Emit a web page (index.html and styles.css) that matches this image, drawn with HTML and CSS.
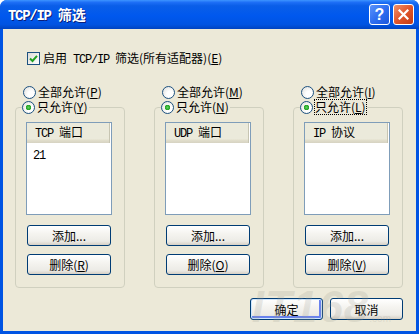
FILE: index.html
```html
<!DOCTYPE html>
<html lang="zh-CN">
<head>
  <meta charset="UTF-8" />
  <title>TCP/IP 筛选</title>
  <link rel="stylesheet" href="styles.css">
</head>
<body>
  <div class="window">
    <div class="titlebar">
      <span class="title"><span class="en">TCP/IP </span>筛选</span>
      <div class="caption-btns">
        <span class="cbtn help">?</span>
        <span class="cbtn close">
          <svg width="11" height="11" viewBox="0 0 11 11"><path d="M1.5 1.5 L9.5 9.5 M9.5 1.5 L1.5 9.5" stroke="#fff" stroke-width="2.2" stroke-linecap="square"/></svg>
        </span>
      </div>
    </div>

    <div class="client">
      <label class="check-row">
        <span class="checkbox">
          <svg width="9" height="9" viewBox="0 0 9 9"><path d="M1 4.5 L3.5 7 L8 1.8" fill="none" stroke="#21a121" stroke-width="2"/></svg>
        </span>
        <span>启用<span class="en"> TCP/IP </span>筛选(所有适配器)(<u>E</u>)</span>
      </label>

      <div class="groups">
        <div class="col">
          <label class="radio-row"><span class="radio"></span><span>全部允许(<u>P</u>)</span></label>
          <fieldset class="group">
            <legend><label class="radio-row"><span class="radio on"></span><span>只允许(<u>Y</u>)</span></label></legend>
            <div class="group-body">
              <div class="listbox">
                <div class="list-head"><span><span class="en">TCP </span>端口</span></div>
                <div class="list-item"><span class="en">21</span></div>
              </div>
              <button class="btn">添加...</button>
              <button class="btn">删除(<u>R</u>)</button>
            </div>
          </fieldset>
        </div>

        <div class="col">
          <label class="radio-row"><span class="radio"></span><span>全部允许(<u>M</u>)</span></label>
          <fieldset class="group">
            <legend><label class="radio-row"><span class="radio on"></span><span>只允许(<u>N</u>)</span></label></legend>
            <div class="group-body">
              <div class="listbox">
                <div class="list-head"><span><span class="en">UDP </span>端口</span></div>
              </div>
              <button class="btn">添加...</button>
              <button class="btn">删除(<u>O</u>)</button>
            </div>
          </fieldset>
        </div>

        <div class="col">
          <label class="radio-row"><span class="radio"></span><span>全部允许(<u>I</u>)</span></label>
          <fieldset class="group">
            <legend><label class="radio-row"><span class="radio on"></span><span class="focus">只允许(<u>L</u>)</span></label></legend>
            <div class="group-body">
              <div class="listbox">
                <div class="list-head"><span><span class="en">IP </span>协议</span></div>
              </div>
              <button class="btn">添加...</button>
              <button class="btn">删除(<u>V</u>)</button>
            </div>
          </fieldset>
        </div>
      </div>

      <div class="footer">
        <button class="btn wide default">确定</button>
        <button class="btn wide">取消</button>
        <span class="watermark">IT168<small>.com</small></span>
      </div>
    </div>
  </div>
</body>
</html>
```

FILE: styles.css
```css
body {
  margin: 0;
  background: #ffffff;
  font-family: "Noto Sans CJK SC", "Liberation Sans", sans-serif;
  font-size: 12px;
  line-height: 14px;
  color: #000;
}

.en {
  font-family: "Liberation Mono", monospace;
  letter-spacing: -1.2px;
  white-space: pre;
}

.window {
  width: 419px;
  height: 334px;
  box-sizing: border-box;
  background: #0054e3;
  border-radius: 7px 7px 0 0;
  display: flex;
  flex-direction: column;
  overflow: hidden;
}

.titlebar {
  height: 29px;
  flex: none;
  display: flex;
  align-items: center;
  justify-content: space-between;
  padding: 0 5px 0 8px;
  background: linear-gradient(to bottom, #3d95ff 0%, #1e6ff6 8%, #0a5ee8 20%, #0058ee 55%, #0053e1 85%, #0043c0 100%);
}

.title {
  color: #fff;
  font-weight: bold;
  font-size: 14px;
  line-height: 16px;
  text-shadow: 1px 1px 0 #0a1e7a;
  margin-top: 1px;
}

.title .en {
  letter-spacing: -1.3px;
}

.caption-btns {
  display: flex;
  gap: 3px;
}

.cbtn {
  width: 21px;
  height: 21px;
  box-sizing: border-box;
  border: 1px solid #fff;
  border-radius: 3px;
  display: flex;
  align-items: center;
  justify-content: center;
  color: #fff;
}

.help {
  background: linear-gradient(to bottom right, #5b93fb, #2f6ff0 50%, #1b56dc);
  font-family: "Liberation Sans", sans-serif;
  font-weight: bold;
  font-size: 16px;
}

.close {
  background: linear-gradient(to bottom right, #f0926c, #e0552b 50%, #c23b15);
}

.client {
  flex: 1;
  margin: 0 3px 3px;
  background: #ece9d8;
  padding: 23px 13px 0 12px;
}

.check-row {
  display: flex;
  align-items: center;
  gap: 3px;
  height: 13px;
  margin-left: 12px;
  white-space: nowrap;
}

.checkbox {
  width: 13px;
  height: 13px;
  box-sizing: border-box;
  border: 1px solid #1c5180;
  background: linear-gradient(to bottom right, #dcdcd7, #ffffff);
  display: flex;
  align-items: center;
  justify-content: center;
  flex: none;
}

.groups {
  display: flex;
  gap: 29px;
  margin-top: 19px;
}

.col {
  width: 110px;
}

.radio-row {
  display: flex;
  align-items: center;
  gap: 2px;
  height: 16px;
  padding-left: 8px;
  white-space: nowrap;
}

.radio {
  width: 13px;
  height: 13px;
  box-sizing: border-box;
  border: 1px solid #1c5180;
  border-radius: 50%;
  background: radial-gradient(circle at 65% 65%, #ffffff 30%, #dcdcd7 100%);
  flex: none;
}

.radio.on {
  background: radial-gradient(circle, #5fd15f 0, #21a121 2.5px, transparent 3px),
              radial-gradient(circle at 65% 65%, #ffffff 30%, #dcdcd7 100%);
}

.group {
  margin: 0;
  padding: 0;
  border: 1px solid #d0d0bf;
  border-radius: 4px;
  min-width: 0;
}

.group legend {
  padding: 0 1px 0 0;
  margin-left: 6px;
}

.group legend .radio-row {
  height: 14px;
  padding-left: 0;
}

.focus {
  outline: 1px dotted #000;
  outline-offset: 0;
}

.group-body {
  padding: 8px 12px 12px 10px;
  display: flex;
  flex-direction: column;
}

.listbox {
  height: 93px;
  box-sizing: border-box;
  border: 1px solid #7f9db9;
  background: #fff;
}

.list-head {
  height: 20px;
  display: flex;
  align-items: center;
  padding-left: 8px;
  margin-right: 1px;
  background: linear-gradient(to bottom, #ebeadb 0%, #ebeadb 80%, #e2dfcc 85%, #d6d2c2 100%);
  border-right: 1px solid #c7c5b2;
}

.list-item {
  padding: 3px 0 0 6px;
  line-height: 16px;
}

.btn {
  height: 21px;
  margin: 10px 1px 0;
  padding: 0;
  box-sizing: border-box;
  border: 1px solid #003c74;
  border-radius: 3px;
  background: linear-gradient(to bottom, #ffffff 0%, #f5f4f0 40%, #ecebe6 80%, #d6d0c5 100%);
  font-family: inherit;
  font-size: 12px;
  color: #000;
  line-height: 17px;
}

.btn + .btn {
  margin-top: 8px;
}

.footer {
  position: relative;
  display: flex;
  justify-content: flex-end;
  gap: 7px;
  margin-top: 10px;
}

.btn.wide {
  width: 73px;
  height: 22px;
  margin: 0;
}

.btn.default {
  box-shadow: inset 0 0 0 1px #cee7ff, inset -1px -1px 0 2px #6982ee;
}

/* faint site watermark over the buttons */
.watermark {
  position: absolute;
  right: 12px;
  top: -14px;
  font-family: "Liberation Sans", sans-serif;
  font-style: italic;
  font-weight: bold;
  font-size: 44px;
  line-height: 46px;
  letter-spacing: 1px;
  color: rgba(160, 160, 150, 0.22);
  pointer-events: none;
}

.watermark small {
  font-size: 10px;
  font-style: normal;
  font-weight: normal;
  letter-spacing: 0;
}
```
